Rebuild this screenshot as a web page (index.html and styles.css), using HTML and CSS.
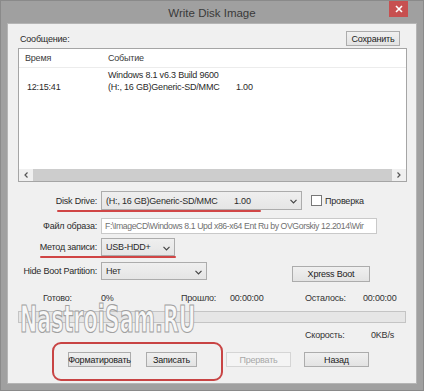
FILE: index.html
```html
<!DOCTYPE html>
<html>
<head>
<meta charset="utf-8">
<link rel="stylesheet" href="styles.css">
</head>
<body>
<div class="window">
  <div class="titlebar">
    <span class="title">Write Disk Image</span>
    <div class="close"><svg width="8" height="8" viewBox="0 0 8 8"><path d="M1 1L7 7M7 1L1 7" stroke="#fff" stroke-width="1.6"/></svg></div>
  </div>
  <div class="client">
    <div class="top-row">
      <span>Сообщение:</span>
      <div class="btn btn-save">Сохранить</div>
    </div>
    <div class="listbox">
      <div class="lv-head"><span class="col1">Время</span><span>Событие</span></div>
      <div class="lv-row">
        <span class="col1 time">12:15:41</span>
        <div class="event">
          <div>Windows 8.1 v6.3 Build 9600</div>
          <div><span class="dev">(H:, 16 GB)Generic-SD/MMC</span>1.00</div>
        </div>
      </div>
      <div class="hscroll">
        <div class="sarrow"><svg width="4" height="6" viewBox="0 0 4 6"><path d="M3.5 0.5L1 3l2.5 2.5" fill="none" stroke="#555" stroke-width="1.2"/></svg></div>
        <div class="thumb"></div>
        <div class="sarrow"><svg width="4" height="6" viewBox="0 0 4 6"><path d="M0.5 0.5L3 3L0.5 5.5" fill="none" stroke="#555" stroke-width="1.2"/></svg></div>
      </div>
    </div>

    <div class="row row-drive">
      <span class="label">Disk Drive:</span>
      <div class="combo combo-drive"><span class="dev">(H:, 16 GB)Generic-SD/MMC</span><span>1.00</span><svg class="arrow" width="7" height="5" viewBox="0 0 7 5"><path d="M0.5 0.8L3.5 3.8L6.5 0.8" fill="none" stroke="#444" stroke-width="1.2"/></svg></div>
      <div class="check"></div>
      <span class="check-label">Проверка</span>
    </div>
    <div class="row row-file">
      <span class="label">Файл образа:</span>
      <div class="field">F:\ImageCD\Windows 8.1 Upd x86-x64 Ent Ru by OVGorskiy 12.2014\Wir</div>
    </div>
    <div class="row row-method">
      <span class="label">Метод записи:</span>
      <div class="combo combo-method"><span>USB-HDD+</span><svg class="arrow" width="7" height="5" viewBox="0 0 7 5"><path d="M0.5 0.8L3.5 3.8L6.5 0.8" fill="none" stroke="#444" stroke-width="1.2"/></svg></div>
    </div>
    <div class="row row-hide">
      <span class="label">Hide Boot Partition:</span>
      <div class="combo combo-hide"><span>Нет</span><svg class="arrow" width="7" height="5" viewBox="0 0 7 5"><path d="M0.5 0.8L3.5 3.8L6.5 0.8" fill="none" stroke="#444" stroke-width="1.2"/></svg></div>
      <div class="btn btn-xpress">Xpress Boot</div>
    </div>

    <div class="stats">
      <span class="s1">Готово:</span><span class="s2">0%</span><span class="s3">Прошло:</span><span class="s4">00:00:00</span><span class="s5">Осталось:</span><span>00:00:00</span>
    </div>
    <div class="progress"></div>
    <div class="speed">
      <span class="s5">Скорость:</span><span>0KB/s</span>
    </div>
    <div class="buttons">
      <div class="btn btn-format">Форматировать</div>
      <div class="btn btn-write">Записать</div>
      <div class="btn btn-abort disabled">Прервать</div>
      <div class="btn btn-back">Назад</div>
    </div>

    <div class="mark mark-drive"></div>
    <div class="mark mark-method"></div>
    <div class="mark-box"></div>
    <div class="watermark">NastroiSam.RU</div>
  </div>
</div>
</body>
</html>
```

FILE: styles.css
```css
* { box-sizing: border-box; }
html, body { margin: 0; padding: 0; }
body {
  width: 424px;
  height: 391px;
  overflow: hidden;
  background: #9e9e9e;
  font-family: "Liberation Sans", Arial, sans-serif;
  font-size: 9px;
  letter-spacing: -0.2px;
  color: #2a2a2a;
}
.window {
  position: relative;
  width: 424px;
  height: 391px;
  background: #a0a0a0;
  border: 1px solid #8a8a8a;
  padding: 0 6px 6px;
  display: flex;
  flex-direction: column;
}
.titlebar {
  height: 22px;
  display: flex;
  align-items: center;
  justify-content: center;
  position: relative;
}
.title {
  font-size: 11.5px;
  letter-spacing: 0;
  color: #3a3a3a;
  padding-top: 1px;
}
.close {
  position: absolute;
  right: 9px;
  top: 0;
  width: 19px;
  height: 16px;
  background: #c75050;
  display: flex;
  align-items: center;
  justify-content: center;
}
.client {
  position: relative;
  flex: 1;
  background: #f0f0f0;
  border: 1px solid #b5b5b5;
  display: flex;
  flex-direction: column;
}
.top-row {
  display: flex;
  align-items: center;
  justify-content: space-between;
  padding: 7px 16px 0 12px;
}
.btn {
  height: 15px;
  border: 1px solid #acacac;
  background: linear-gradient(#f0f0f0, #e3e3e3);
  display: flex;
  align-items: center;
  justify-content: center;
  color: #222;
  white-space: nowrap;
}
.btn-save { width: 54px; }
.listbox {
  margin: 2px 9px 0 10px;
  height: 134px;
  border: 1px solid #a5a5a5;
  background: #fff;
  display: flex;
  flex-direction: column;
}
.lv-head {
  height: 19px;
  border-bottom: 1px solid #ececec;
  display: flex;
  align-items: center;
  color: #3c3c3c;
}
.col1 { width: 89px; padding-left: 6px; flex: none; }
.lv-row {
  display: flex;
  padding-top: 1px;
  line-height: 12px;
}
.time { align-self: flex-end; padding-left: 8px; }
.event .dev { display: inline-block; width: 128px; }
.hscroll {
  margin-top: auto;
  height: 12px;
  display: flex;
  background: #f0f0f0;
}
.sarrow {
  width: 14px;
  display: flex;
  align-items: center;
  justify-content: center;
}
.thumb { flex: 1; background: #cdcdcd; }

.row { display: flex; align-items: center; }
.label { width: 89px; text-align: right; margin-right: 4px; flex: none; white-space: nowrap; }
.combo {
  height: 19px;
  border: 1px solid #acacac;
  background: linear-gradient(#efefef, #e5e5e5);
  display: flex;
  align-items: center;
  padding-left: 4px;
  position: relative;
  white-space: nowrap;
}
.combo .arrow { position: absolute; right: 4px; top: 7px; }
.row-drive { margin-top: 9px; }
.combo-drive { width: 201px; }
.combo-drive .dev { width: 128px; }
.check {
  width: 11px;
  height: 11px;
  border: 1px solid #777;
  background: #fff;
  margin-left: 9px;
}
.check-label { margin-left: 3px; }
.row-file { margin-top: 8px; }
.field {
  width: 276px;
  height: 16px;
  border: 1px solid #c9c9c9;
  background: #fff;
  color: #707070;
  padding-left: 3px;
  line-height: 14px;
  white-space: nowrap;
  overflow: hidden;
  font-size: 8.7px;
  letter-spacing: -0.4px;
}
.row-method { margin-top: 4px; }
.combo-method { width: 74px; height: 18px; }
.row-hide { margin-top: 6px; align-items: flex-start; }
.row-hide .label { line-height: 18px; }
.combo-hide { width: 106px; height: 18px; }
.btn-xpress { width: 78px; height: 16px; margin-left: 85px; margin-top: 4px; }

.stats, .speed {
  display: flex;
  height: 12px;
  line-height: 12px;
  padding-left: 35px;
  color: #333;
}
.stats { margin-top: 10px; }
.s1 { width: 58px; }
.s2 { width: 80px; }
.s3 { width: 49px; }
.s4 { width: 75px; }
.s5 { width: 58px; }
.speed { margin-top: 6px; padding-left: 297px; }
.speed .s5 { width: 66px; }
.progress {
  margin: 7px 10px 0 10px;
  height: 12px;
  border: 1px solid #c4c4c4;
  background: #e6e6e6;
}
.buttons {
  display: flex;
  margin-top: 11px;
  padding-left: 60px;
}
.btn-format { width: 63px; }
.btn-write { width: 51px; margin-left: 15px; }
.btn-abort { width: 65px; margin-left: 29px; }
.btn-back { width: 65px; margin-left: 13px; }
.btn.disabled { color: #a8a8a8; border-color: #d5d5d5; background: #f4f4f4; }

.mark {
  position: absolute;
  height: 2px;
  background: #d04545;
  border-radius: 1px;
}
.mark-drive { left: 49px; top: 186px; width: 204px; }
.mark-method { left: 32px; top: 232px; width: 136px; }
.mark-box {
  position: absolute;
  left: 44px;
  top: 318px;
  width: 171px;
  height: 39px;
  border: 2px solid #c84444;
  border-radius: 9px;
}
.watermark {
  position: absolute;
  left: 12px;
  top: 284px;
  font-family: "DejaVu Sans Condensed", "DejaVu Sans", sans-serif;
  font-weight: bold;
  font-size: 37px;
  line-height: 24px;
  letter-spacing: 0;
  color: #f7f7f7;
  -webkit-text-stroke: 1.2px #a0a0a0;
  transform: scaleX(0.62);
  transform-origin: 0 0;
  white-space: nowrap;
}
```
